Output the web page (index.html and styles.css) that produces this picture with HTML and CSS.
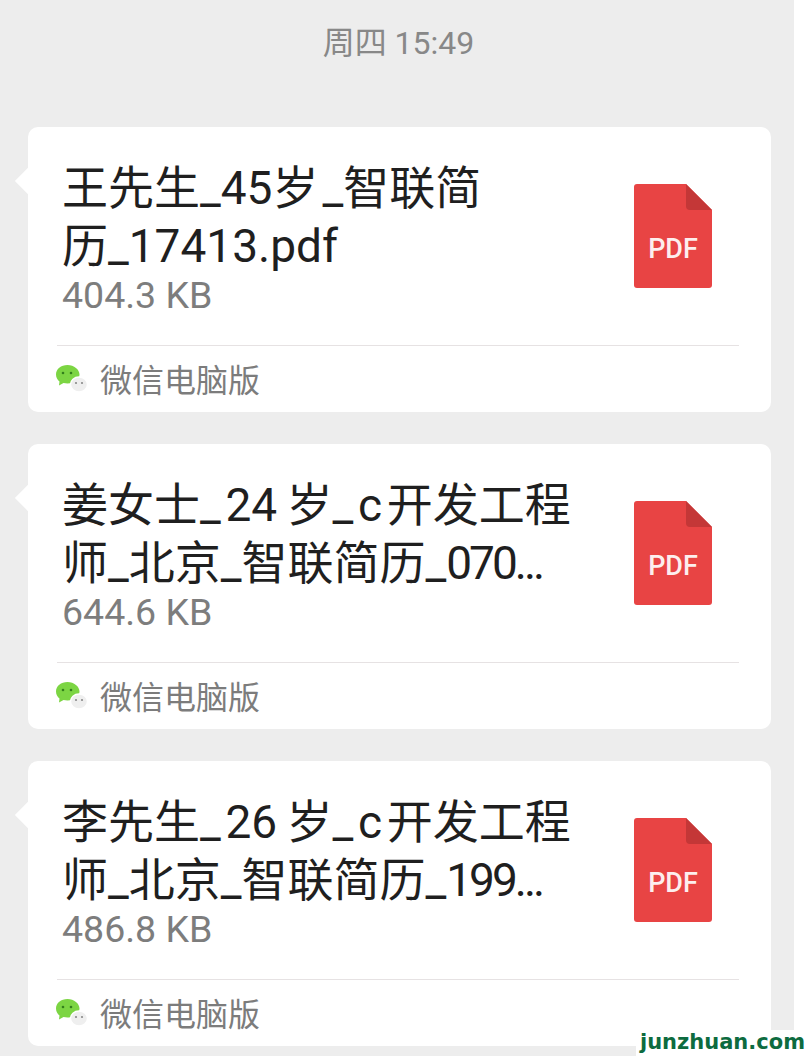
FILE: index.html
```html
<!DOCTYPE html>
<html lang="zh">
<head>
<meta charset="utf-8">
<title>周四 15:49</title>
<link rel="stylesheet" href="styles.css">
</head>
<body>
<main class="screen">
  <div class="time">周四 15:49</div>
  <section class="card">
    <div class="body">
      <div class="info">
        <div class="name">王先生_45岁<span class="nudge">_</span>智联简<br>历_17413.pdf</div>
        <div class="size">404.3 KB</div>
      </div>
      <svg class="pdf" viewBox="0 0 78 104"><path d="M3 0H52L78 26V101a3 3 0 0 1-3 3H3a3 3 0 0 1-3-3V3a3 3 0 0 1 3-3Z" fill="#e84444"/><path d="M52 0L78 26H56a4 4 0 0 1-4-4Z" fill="#c43737"/><text x="39" y="74" class="pdf-label">PDF</text></svg>
    </div>
    <div class="foot">
      <svg class="wx" viewBox="0 0 32 28"><path d="M11.500 0C5 0 0 4 0 9.500c0 3 1.500 5.500 3.500 7L3 20.500l4.500-2.500c1.200.3 2.600.5 4 .5C18 18.500 23.500 14.500 23.500 9.500S18 0 11.500 0Z" fill="#7cd543"/><circle cx="7" cy="8" r="1.300" fill="#33801c"/><circle cx="15" cy="8" r="1.300" fill="#33801c"/><ellipse cx="23" cy="19.500" rx="8.500" ry="7.500" fill="#efefef" stroke="#fff" stroke-width="1.500"/><circle cx="20" cy="18" r="1.100" fill="#8a8a8a"/><circle cx="26" cy="18" r="1.100" fill="#8a8a8a"/></svg>
      <span class="app">微信电脑版</span>
    </div>
  </section>
  <section class="card">
    <div class="body">
      <div class="info">
        <div class="name">姜女士_&#8202;24&#8201;岁_&#8202;c&#8202;开发工程<br>师_北京_智联简历_<span class="tail">070...</span></div>
        <div class="size">644.6 KB</div>
      </div>
      <svg class="pdf" viewBox="0 0 78 104"><path d="M3 0H52L78 26V101a3 3 0 0 1-3 3H3a3 3 0 0 1-3-3V3a3 3 0 0 1 3-3Z" fill="#e84444"/><path d="M52 0L78 26H56a4 4 0 0 1-4-4Z" fill="#c43737"/><text x="39" y="74" class="pdf-label">PDF</text></svg>
    </div>
    <div class="foot">
      <svg class="wx" viewBox="0 0 32 28"><path d="M11.500 0C5 0 0 4 0 9.500c0 3 1.500 5.500 3.500 7L3 20.500l4.500-2.500c1.200.3 2.600.5 4 .5C18 18.500 23.500 14.500 23.500 9.500S18 0 11.500 0Z" fill="#7cd543"/><circle cx="7" cy="8" r="1.300" fill="#33801c"/><circle cx="15" cy="8" r="1.300" fill="#33801c"/><ellipse cx="23" cy="19.500" rx="8.500" ry="7.500" fill="#efefef" stroke="#fff" stroke-width="1.500"/><circle cx="20" cy="18" r="1.100" fill="#8a8a8a"/><circle cx="26" cy="18" r="1.100" fill="#8a8a8a"/></svg>
      <span class="app">微信电脑版</span>
    </div>
  </section>
  <section class="card">
    <div class="body">
      <div class="info">
        <div class="name">李先生_&#8202;26&#8201;岁_&#8202;c&#8202;开发工程<br>师_北京_智联简历_<span class="tail">199...</span></div>
        <div class="size">486.8 KB</div>
      </div>
      <svg class="pdf" viewBox="0 0 78 104"><path d="M3 0H52L78 26V101a3 3 0 0 1-3 3H3a3 3 0 0 1-3-3V3a3 3 0 0 1 3-3Z" fill="#e84444"/><path d="M52 0L78 26H56a4 4 0 0 1-4-4Z" fill="#c43737"/><text x="39" y="74" class="pdf-label">PDF</text></svg>
    </div>
    <div class="foot">
      <svg class="wx" viewBox="0 0 32 28"><path d="M11.500 0C5 0 0 4 0 9.500c0 3 1.500 5.500 3.500 7L3 20.500l4.500-2.500c1.200.3 2.600.5 4 .5C18 18.500 23.500 14.500 23.500 9.500S18 0 11.500 0Z" fill="#7cd543"/><circle cx="7" cy="8" r="1.300" fill="#33801c"/><circle cx="15" cy="8" r="1.300" fill="#33801c"/><ellipse cx="23" cy="19.500" rx="8.500" ry="7.500" fill="#efefef" stroke="#fff" stroke-width="1.500"/><circle cx="20" cy="18" r="1.100" fill="#8a8a8a"/><circle cx="26" cy="18" r="1.100" fill="#8a8a8a"/></svg>
      <span class="app">微信电脑版</span>
    </div>
  </section>
</main>
<div class="mark">junzhuan.com</div>
</body>
</html>
```
FILE: styles.css
```css
html, body {
  margin: 0;
  padding: 0;
  background: #fff;
  height: 1056px;
  overflow: hidden;
}
body {
  font-family: Roboto, "Noto Sans CJK SC", sans-serif;
  position: relative;
}
.screen {
  width: 794px;
  height: 1056px;
  box-sizing: border-box;
  background: #ededed;
  padding: 0 23px 0 28px;
  display: flex;
  flex-direction: column;
  gap: 32px;
}
.time {
  height: 95px;
  padding: 21px 25px 0 28px;
  margin: 0 -23px 0 -28px;
  box-sizing: border-box;
  line-height: 44px;
  text-align: center;
  font-size: 32px;
  color: #888;
}
.card {
  position: relative;
  height: 285px;
  flex: none;
  background: #fff;
  border-radius: 10px;
  display: flex;
  flex-direction: column;
}
.card::before {
  content: "";
  position: absolute;
  left: -9px;
  top: 44px;
  width: 20px;
  height: 20px;
  background: #fff;
  transform: rotate(45deg);
}
.body {
  position: relative;
  flex: none;
  height: 218px;
  box-sizing: border-box;
  padding: 32px 59px 0 35px;
  display: flex;
  justify-content: space-between;
  align-items: flex-start;
}
.info {
  margin-left: -1px;
}
.name {
  font-size: 46px;
  line-height: 58px;
  color: #1f1f1f;
  white-space: nowrap;
}
.nudge {
  margin-left: 4px;
}
.tail {
  letter-spacing: -3px;
}
.size {
  font-size: 37.5px;
  line-height: 40px;
  color: #7d7d7d;
}
.pdf {
  width: 78px;
  height: 104px;
  flex: none;
  margin-top: 25px;
}
.pdf-label {
  font-family: Roboto, sans-serif;
  font-size: 27px;
  font-weight: 500;
  fill: #fdeeee;
  text-anchor: middle;
}
.foot {
  margin: 0 32px 0 29px;
  flex: 1;
  min-height: 0;
  border-top: 1px solid #e6e2e3;
  display: flex;
  align-items: center;
}
.wx {
  width: 32px;
  height: 28px;
  margin-left: -1px;
}
.app {
  font-size: 32px;
  line-height: 60px;
  color: #7c7c7c;
  margin: 3px 0 0 12px;
}
.mark {
  position: absolute;
  right: 0;
  bottom: 0;
  width: 173px;
  height: 26px;
  background: #fff;
  font-family: "DejaVu Sans", sans-serif;
  font-weight: 700;
  font-size: 21px;
  line-height: 24px;
  color: #0d6b3f;
  text-align: center;
  white-space: nowrap;
}
```
